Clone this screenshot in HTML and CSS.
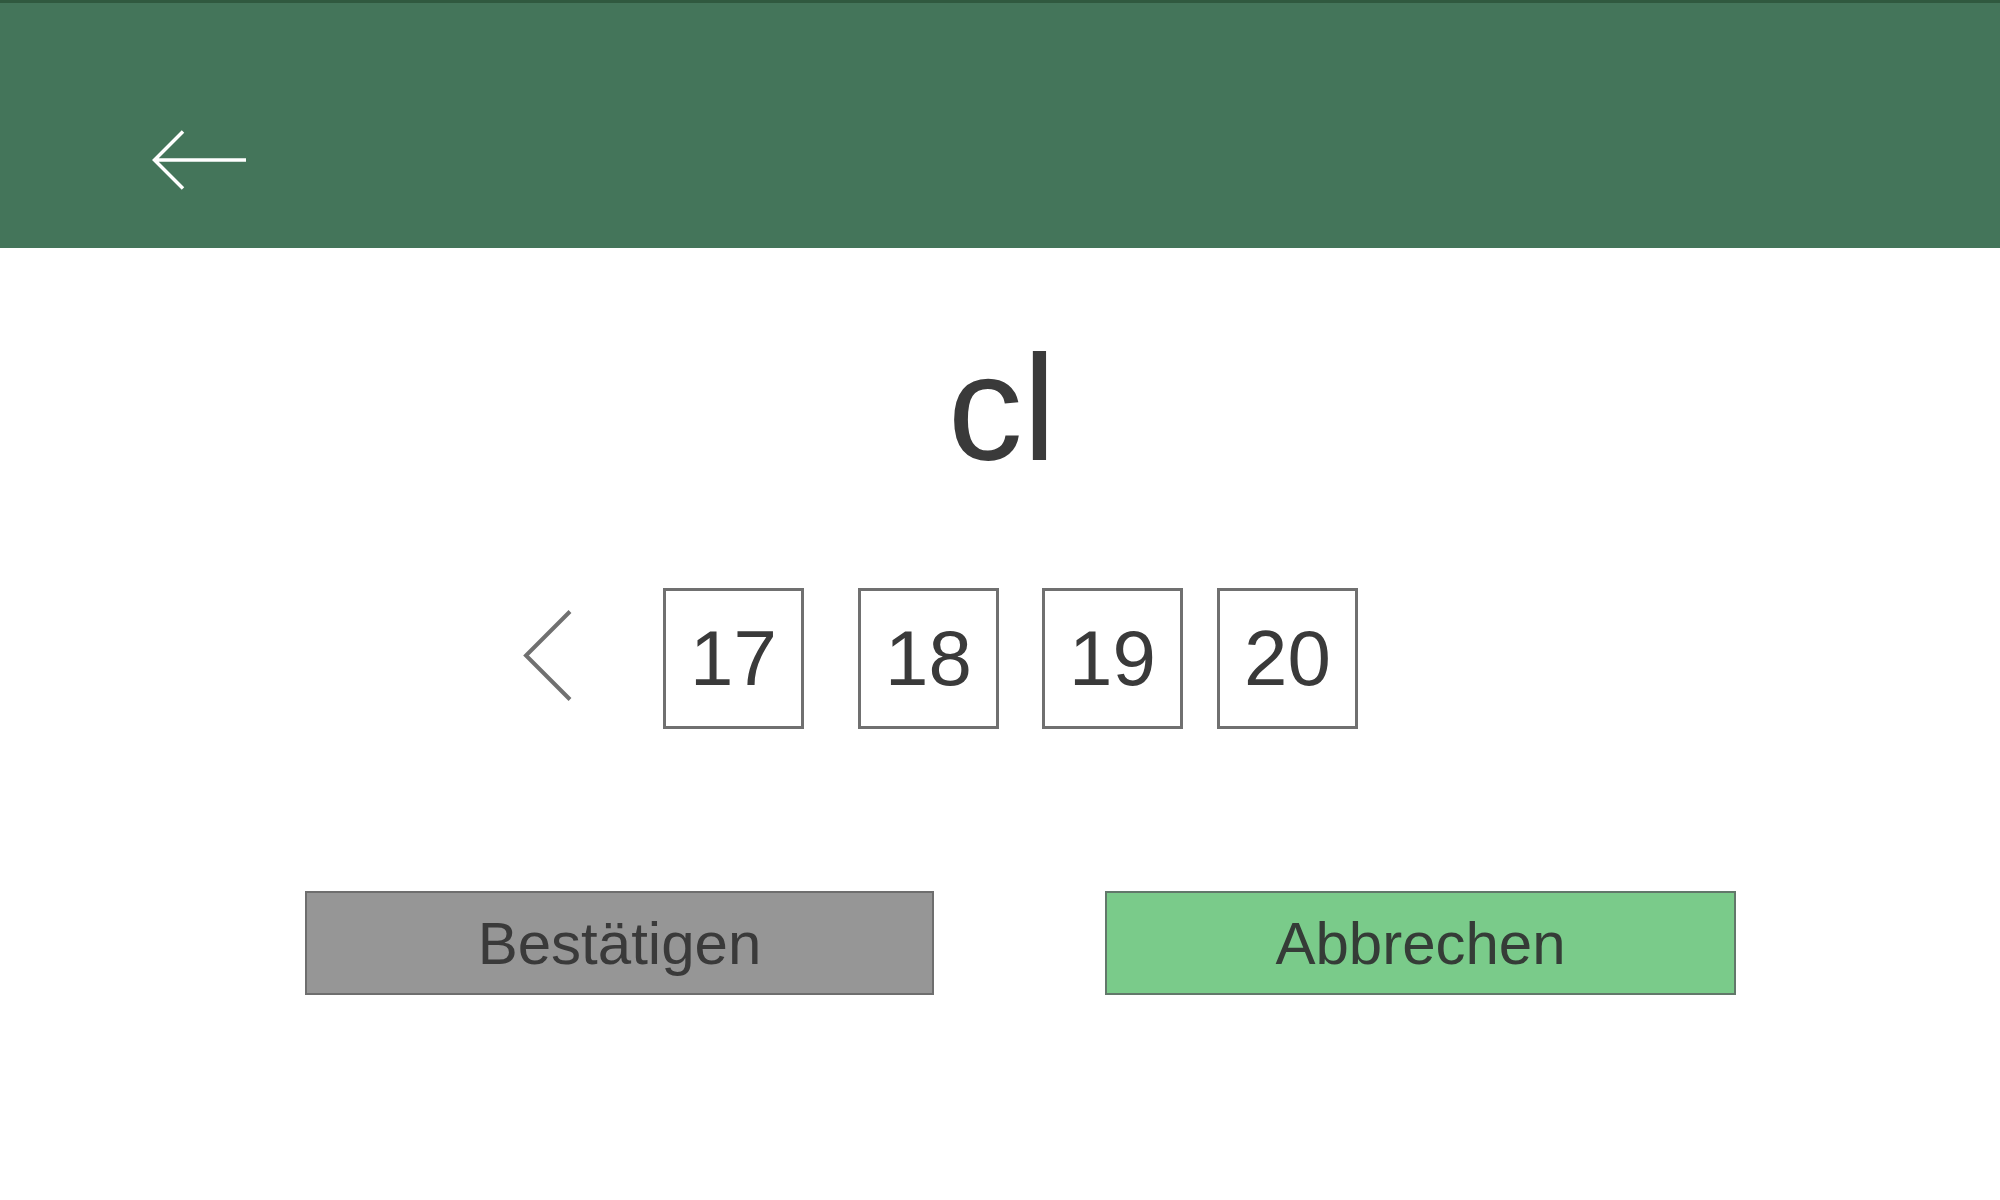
FILE: index.html
```html
<!DOCTYPE html>
<html lang="de">
<head>
<meta charset="utf-8">
<title>cl</title>
<link rel="stylesheet" href="styles.css">
</head>
<body>
<header class="topbar">
  <svg class="back" width="96" height="60" viewBox="0 0 96 60" aria-label="Zurück">
    <path d="M31 1.5 L2.5 30 L31 58.5 M2.5 30 H94" fill="none" stroke="#ffffff" stroke-width="3.5"/>
  </svg>
</header>
<main class="content">
  <h1 class="title">cl</h1>
  <div class="pager">
    <svg class="prev" width="50" height="92" viewBox="0 0 50 92" aria-label="Zurück">
      <path d="M48 1.5 L4 45.5 L48 89.5" fill="none" stroke="#707070" stroke-width="4"/>
    </svg>
    <div class="page p1">17</div>
    <div class="page p2">18</div>
    <div class="page p3">19</div>
    <div class="page p4">20</div>
  </div>
  <div class="actions">
    <button class="btn btn-confirm">Bestätigen</button>
    <button class="btn btn-cancel">Abbrechen</button>
  </div>
</main>
</body>
</html>
```

FILE: styles.css
```css
* { box-sizing: border-box; }
html, body {
  margin: 0;
  padding: 0;
  background: #ffffff;
  font-family: "Liberation Sans", Arial, sans-serif;
  color: #3a3a3a;
}
.topbar {
  height: 248px;
  background: #44755a;
  border-top: 3px solid #30593f;
  padding: 127px 0 0 152px;
}
.back { display: block; }
.content { display: flex; flex-direction: column; }
.title {
  margin: 84px 0 0 0;
  font-weight: normal;
  font-size: 150px;
  line-height: 152px;
  text-align: center;
  padding-left: 4px;
  color: #3a3a3a;
}
.pager {
  margin-top: 104px;
  display: flex;
  align-items: center;
  padding-left: 522px;
}
.prev { display: block; margin: 0 91px 5px 0; }
.page {
  width: 141px;
  height: 141px;
  border: 3px solid #707070;
  display: flex;
  align-items: center;
  justify-content: center;
  font-size: 78px;
  color: #3a3a3a;
}
.p2 { margin-left: 54px; }
.p3 { margin-left: 43px; }
.p4 { margin-left: 34px; }
.actions {
  margin-top: 162px;
  display: flex;
  gap: 171px;
  padding-left: 305px;
}
.btn {
  height: 104px;
  font-family: "Liberation Sans", Arial, sans-serif;
  font-size: 60px;
  color: #3a3a3a;
  display: flex;
  align-items: center;
  justify-content: center;
  padding: 0;
  margin: 0;
}
.btn-confirm {
  width: 629px;
  background: #969696;
  border: 2px solid #6e6e6e;
}
.btn-cancel {
  width: 631px;
  background: #7acb8a;
  border: 2px solid #62786a;
  color: #353c37;
}
```
